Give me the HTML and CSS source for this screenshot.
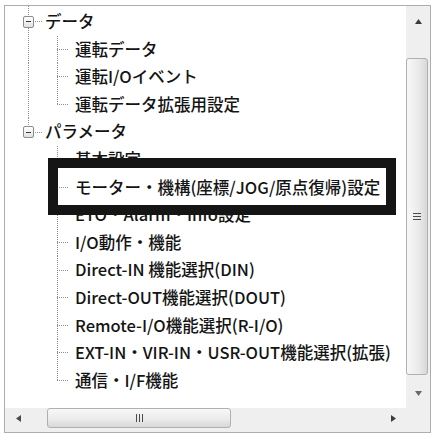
FILE: index.html
```html
<!DOCTYPE html>
<html lang="ja">
<head>
<meta charset="utf-8">
<title>Tree</title>
<link rel="stylesheet" href="styles.css">
</head>
<body>
<div class="frame">
  <div class="view">
    <div class="row">
      <div class="g0 branch-mid"><span class="toggle"><span class="minus"></span></span></div>
      <span class="label">データ</span>
    </div>
    <div class="row">
      <div class="g0 pass"></div><div class="g1 mid"></div>
      <span class="label">運転データ</span>
    </div>
    <div class="row">
      <div class="g0 pass"></div><div class="g1 mid"></div>
      <span class="label">運転I/Oイベント</span>
    </div>
    <div class="row">
      <div class="g0 pass"></div><div class="g1 last"></div>
      <span class="label">運転データ拡張用設定</span>
    </div>
    <div class="row">
      <div class="g0 branch-last"><span class="toggle"><span class="minus"></span></span></div>
      <span class="label">パラメータ</span>
    </div>
    <div class="row">
      <div class="g0"></div><div class="g1 mid"></div>
      <span class="label">基本設定</span>
    </div>
    <div class="row">
      <div class="g0"></div><div class="g1 mid"></div>
      <span class="label">モーター・機構(座標/JOG/原点復帰)設定</span>
    </div>
    <div class="row">
      <div class="g0"></div><div class="g1 mid"></div>
      <span class="label">ETO・Alarm・Info設定</span>
    </div>
    <div class="row">
      <div class="g0"></div><div class="g1 mid"></div>
      <span class="label">I/O動作・機能</span>
    </div>
    <div class="row">
      <div class="g0"></div><div class="g1 mid"></div>
      <span class="label">Direct-IN 機能選択(DIN)</span>
    </div>
    <div class="row">
      <div class="g0"></div><div class="g1 mid"></div>
      <span class="label">Direct-OUT機能選択(DOUT)</span>
    </div>
    <div class="row">
      <div class="g0"></div><div class="g1 mid"></div>
      <span class="label">Remote-I/O機能選択(R-I/O)</span>
    </div>
    <div class="row">
      <div class="g0"></div><div class="g1 mid"></div>
      <span class="label">EXT-IN・VIR-IN・USR-OUT機能選択(拡張)</span>
    </div>
    <div class="row">
      <div class="g0"></div><div class="g1 last"></div>
      <span class="label">通信・I/F機能</span>
    </div>
  </div>

  <div class="vscroll">
    <div class="btn btn-v">
      <svg width="7" height="5" viewBox="0 0 7 5"><polygon points="3.5,0 7,5 0,5" fill="#3c3c3c"/></svg>
    </div>
    <div class="track-gap-top"></div>
    <div class="thumb thumb-v">
      <svg width="8" height="7" viewBox="0 0 8 7"><path d="M0 0.5H8M0 3.5H8M0 6.5H8" stroke="#4a4a4a" stroke-width="1"/></svg>
    </div>
    <div class="track-fill"></div>
    <div class="btn btn-v">
      <svg width="7" height="5" viewBox="0 0 7 5"><polygon points="0,0 7,0 3.5,5" fill="#6a6a6a"/></svg>
    </div>
  </div>

  <div class="hscroll">
    <div class="btn btn-h">
      <svg width="5" height="7" viewBox="0 0 5 7"><polygon points="5,0 5,7 0,3.5" fill="#4a4a4a"/></svg>
    </div>
    <div class="track-gap-left"></div>
    <div class="thumb thumb-h">
      <svg width="7" height="8" viewBox="0 0 7 8"><path d="M0.5 0V8M3.5 0V8M6.5 0V8" stroke="#4a4a4a" stroke-width="1"/></svg>
    </div>
    <div class="track-fill"></div>
    <div class="btn btn-h">
      <svg width="5" height="7" viewBox="0 0 5 7"><polygon points="0,0 5,3.5 0,7" fill="#3c3c3c"/></svg>
    </div>
  </div>

  <div class="corner"></div>

  <div class="callout"></div>
</div>
</body>
</html>
```

FILE: styles.css
```css
:root {
  --dot: #8f8f8f;
  --dv: repeating-linear-gradient(to bottom, var(--dot) 0 1px, transparent 1px 2px);
  --dh: repeating-linear-gradient(to right, var(--dot) 0 1px, transparent 1px 2px);
}

html, body {
  margin: 0;
  padding: 0;
  background: #ffffff;
}

.frame {
  position: relative;
  margin: 5px 0 0 4px;
  width: 427px;
  height: 428px;
  box-sizing: border-box;
  border: 1px solid #adadad;
  display: grid;
  grid-template-columns: 1fr 24px;
  grid-template-rows: 1fr 24px;
  background: #ffffff;
}

.view {
  overflow: hidden;
  padding-top: 2px;
  background-color: #ffffff;
  background-image: var(--dv);
  background-size: 1px 2px;
  background-position: 23px 0;
  background-repeat: no-repeat;
}

.row {
  display: flex;
  align-items: center;
  height: 27.6px;
}

.g0 {
  flex: none;
  width: 38px;
  height: 100%;
  display: flex;
  align-items: center;
  background-repeat: no-repeat;
}

.g1 {
  flex: none;
  width: 30px;
  height: 100%;
  background-repeat: no-repeat;
}

.g0.pass {
  background-image: var(--dv);
  background-size: 1px 100%;
  background-position: 23px 0;
}

.g0.branch-mid {
  background-image: var(--dv), var(--dh);
  background-size: 1px 100%, 8px 1px;
  background-position: 23px 0, 30px 50%;
}

.g0.branch-last {
  background-image: var(--dv), var(--dh);
  background-size: 1px 50%, 8px 1px;
  background-position: 23px 0, 30px 50%;
}

.g1.mid {
  background-image: var(--dv), var(--dh);
  background-size: 1px 100%, 12px 1px;
  background-position: 14px 0, 14px 50%;
}

.g1.last {
  background-image: var(--dv), var(--dh);
  background-size: 1px 50%, 12px 1px;
  background-position: 14px 0, 14px 50%;
}

.toggle {
  box-sizing: border-box;
  width: 11px;
  height: 12px;
  margin-left: 18px;
  border: 1px solid #8c8c8c;
  border-radius: 2px;
  background: linear-gradient(#ffffff, #e2e2e2);
  display: flex;
  align-items: center;
  justify-content: center;
}

.minus {
  width: 5px;
  height: 1px;
  background: #3a3a3a;
}

.label {
  margin-left: 2px;
  font-family: "Noto Sans CJK JP", "Noto Sans", sans-serif;
  font-size: 16.5px;
  font-weight: 500;
  color: #141414;
  white-space: nowrap;
  line-height: 27.6px;
}

.vscroll {
  grid-column: 2;
  grid-row: 1;
  display: flex;
  flex-direction: column;
  background: #efefef;
}

.hscroll {
  grid-column: 1;
  grid-row: 2;
  display: flex;
  background: #efefef;
}

.corner {
  grid-column: 2;
  grid-row: 2;
  background: #efefef;
}

.btn {
  flex: none;
  display: flex;
  align-items: center;
  justify-content: center;
}

.btn-v {
  height: 30px;
}

.btn-h {
  width: 26px;
  padding-bottom: 3px;
}

.track-gap-top {
  flex: none;
  height: 22px;
}

.track-gap-left {
  flex: none;
  width: 16px;
}

.track-fill {
  flex: 1;
}

.thumb {
  flex: none;
  box-sizing: border-box;
  border: 1px solid #b0b0b0;
  border-radius: 3px;
  display: flex;
  align-items: center;
  justify-content: center;
}

.thumb-v {
  height: 317px;
  margin: 0 2px 0 0;
  background: linear-gradient(to right, #f8f8f8, #ebebeb 55%, #d8d8d8);
}

.thumb-h {
  width: 184px;
  margin: 0 0 4px 0;
  background: linear-gradient(to bottom, #f8f8f8, #ebebeb 55%, #d8d8d8);
}

.callout {
  position: absolute;
  left: 43px;
  top: 152px;
  width: 348px;
  height: 57px;
  box-sizing: border-box;
  border: 10px solid #151515;
}
```
